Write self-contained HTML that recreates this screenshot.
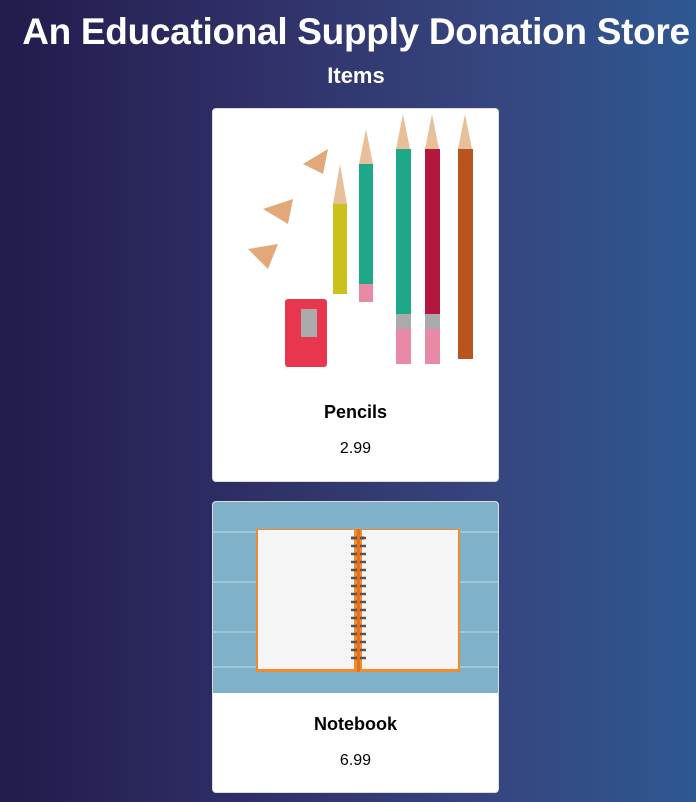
<!DOCTYPE html>
<html><head><style>
html,body{margin:0;padding:0}
body{width:696px;height:802px;overflow:hidden;background:linear-gradient(90deg,#221b4c 0%,#2f2f66 35%,#36457e 70%,#2e5892 100%);font-family:"Liberation Sans",sans-serif;color:#fff;position:relative}
h1{position:absolute;top:11px;left:0;width:712px;text-align:center;margin:0;font-size:37px;font-weight:bold;letter-spacing:-0.3px;line-height:42px}
h2{position:absolute;top:63px;left:0;width:712px;text-align:center;margin:0;font-size:22px;font-weight:bold;line-height:26px}
.card{position:absolute;left:212px;width:287px;background:#fff;border-radius:4px;border:1px solid #ddd;box-sizing:border-box;color:#000;text-align:center;overflow:hidden}
.t{position:absolute;left:0;width:100%;font-size:18px;font-weight:bold}
.p{position:absolute;left:0;width:100%;font-size:16px}
</style></head><body>
<h1>An Educational Supply Donation Store</h1>
<h2>Items</h2>
<div class="card" style="top:108px;height:374px">
<svg width="287" height="280" style="position:absolute;top:0;left:0">
<polygon points="120,95 127,55 134,95" fill="#e7c09a"/><rect x="120" y="95" width="14" height="90" fill="#c9c21a"/>
<polygon points="146,55 153,20 160,55" fill="#e7c09a"/><rect x="146" y="55" width="14" height="130" fill="#1ea888"/><rect x="146" y="175" width="14" height="18" fill="#e88aa5"/>
<polygon points="183,40 190,5 197,40" fill="#e7c09a"/><rect x="183" y="40" width="15" height="170" fill="#1ea888"/><rect x="183" y="205" width="15" height="15" fill="#aaa"/><rect x="183" y="220" width="15" height="35" fill="#e88aa5"/>
<polygon points="212,40 219,5 226,40" fill="#e7c09a"/><rect x="212" y="40" width="15" height="170" fill="#b3173e"/><rect x="212" y="205" width="15" height="15" fill="#aaa"/><rect x="212" y="220" width="15" height="35" fill="#e88aa5"/>
<polygon points="245,40 252,5 259,40" fill="#e7c09a"/><rect x="245" y="40" width="15" height="210" fill="#b8551d"/>
<rect x="72" y="190" width="42" height="68" rx="3" fill="#e8364f"/><rect x="88" y="200" width="16" height="28" fill="#aaa"/>
<polygon points="50,100 80,90 75,115" fill="#e3a877"/><polygon points="35,140 65,135 55,160" fill="#e3a877"/><polygon points="90,55 115,40 110,65" fill="#e3a877"/>
</svg>
<div class="t" style="top:293px">Pencils</div>
<div class="p" style="top:331px">2.99</div>
</div>
<div class="card" style="top:501px;height:292px">
<svg width="287" height="191" style="position:absolute;top:0;left:0">
<rect width="287" height="191" fill="#7fb2c9"/>
<g stroke="#9ec7d8" stroke-width="2"><line x1="0" y1="30" x2="287" y2="30"/><line x1="0" y1="80" x2="287" y2="80"/><line x1="0" y1="130" x2="287" y2="130"/><line x1="0" y1="165" x2="287" y2="165"/></g>
<rect x="43" y="27" width="204" height="143" fill="#f28a2e"/>
<rect x="45" y="28" width="96" height="139" fill="#f5f5f5"/><rect x="149" y="28" width="96" height="139" fill="#f5f5f5"/>
<rect x="144" y="27" width="3" height="143" fill="#e2701c"/>
<line x1="138" y1="36" x2="153" y2="36" stroke="#555" stroke-width="3" stroke-dasharray="3 2"/>
<g stroke="#555" stroke-width="2.5"><line x1="138" y1="36" x2="153" y2="36"/><line x1="138" y1="44" x2="153" y2="44"/><line x1="138" y1="52" x2="153" y2="52"/><line x1="138" y1="60" x2="153" y2="60"/><line x1="138" y1="68" x2="153" y2="68"/><line x1="138" y1="76" x2="153" y2="76"/><line x1="138" y1="84" x2="153" y2="84"/><line x1="138" y1="92" x2="153" y2="92"/><line x1="138" y1="100" x2="153" y2="100"/><line x1="138" y1="108" x2="153" y2="108"/><line x1="138" y1="116" x2="153" y2="116"/><line x1="138" y1="124" x2="153" y2="124"/><line x1="138" y1="132" x2="153" y2="132"/><line x1="138" y1="140" x2="153" y2="140"/><line x1="138" y1="148" x2="153" y2="148"/><line x1="138" y1="156" x2="153" y2="156"/></g>
<rect x="144" y="27" width="3" height="143" fill="#e2701c"/>
</svg>
<div class="t" style="top:212px">Notebook</div>
<div class="p" style="top:250px">6.99</div>
</div>
</body></html>
